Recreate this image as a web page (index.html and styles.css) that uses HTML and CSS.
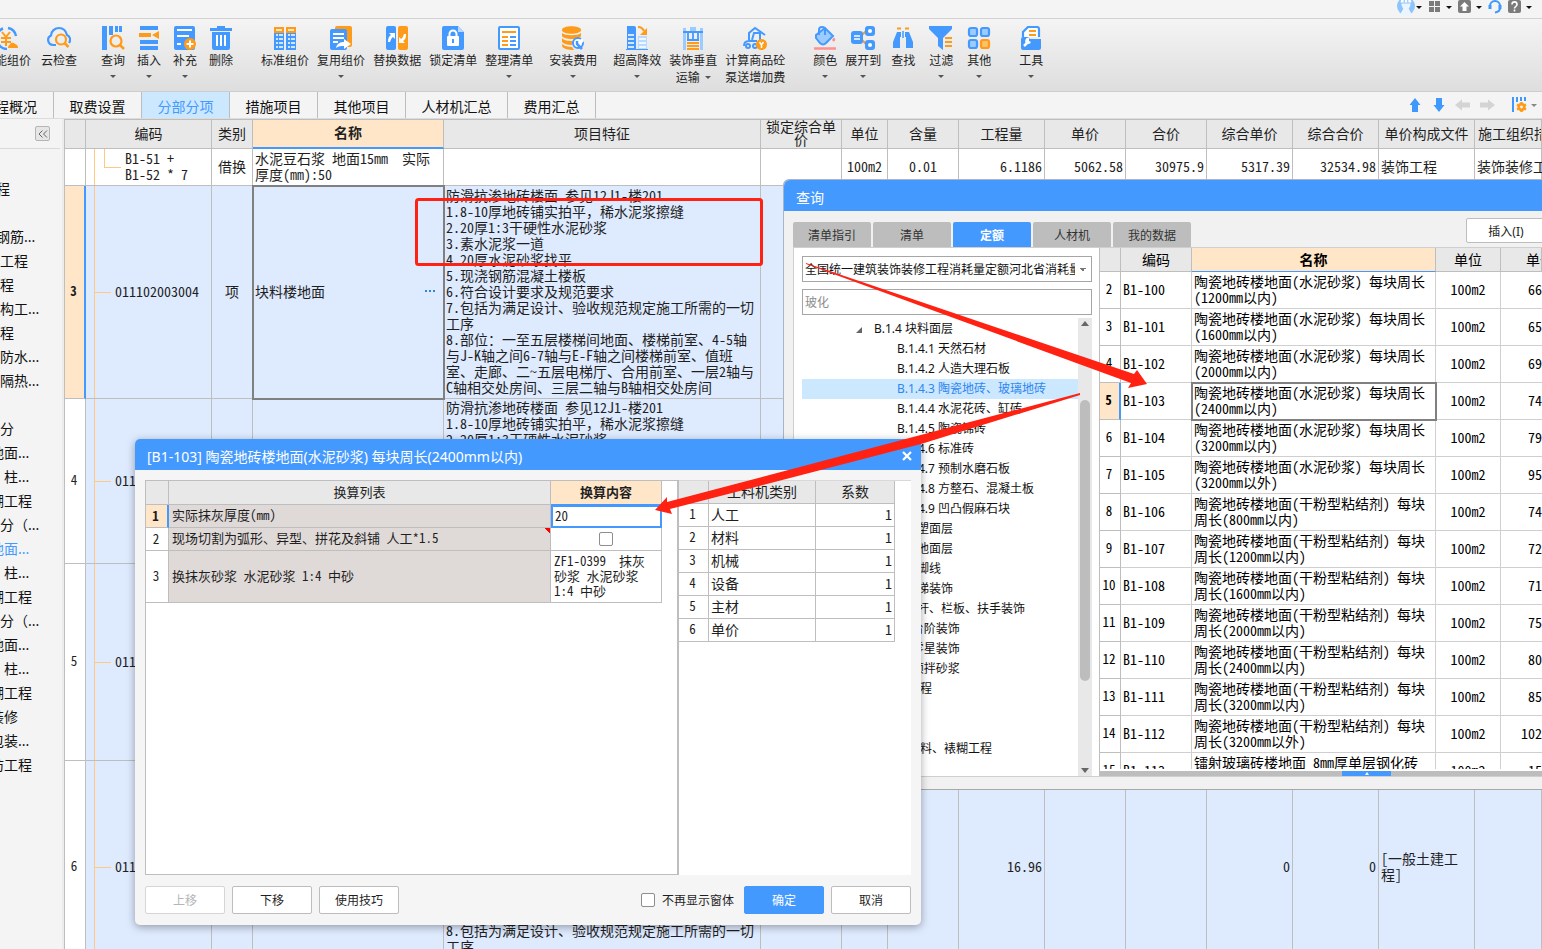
FILE: index.html
```
<!DOCTYPE html>
<html lang="zh-CN">
<head>
<meta charset="utf-8">
<title>分部分项</title>
<link rel="stylesheet" href="styles.css">
</head>
<body>
<div class="app">
  <header class="titlebar">
    <button class="tool-btn user" aria-label="用户"><svg class="avatar" viewBox="0 0 20 20"><circle cx="10" cy="9" r="10" fill="#8cc4fb"/><path d="M4 5a6 6 0 0 1 12 0z" fill="#fff"/><path d="M5 6h10c0 4-2 5-2 6l4 7H3l4-7c0-1-2-2-2-6z" fill="#eaf5ff"/><path d="M8 0v5M12 0v5" stroke="#6fb3f7"/></svg><i class="caret dark"></i></button>
    <button class="tool-btn" aria-label="布局"><svg viewBox="0 0 14 14" fill="#7b7b7b"><path d="M1 1h5v5H1zM7 1h5v5H7zM1 7h5v5H1zM7 7h5v5H7z"/></svg><i class="caret dark"></i></button>
    <button class="tool-btn" aria-label="上传"><svg viewBox="0 0 14 14"><rect width="13" height="13" rx="2" fill="#7b7b7b"/><path d="M6.500 2 11 6.500H8.500V11h-4V6.500H2z" fill="#fff"/></svg><i class="caret dark"></i></button>
    <button class="tool-btn" aria-label="客服"><svg viewBox="0 0 14 14" fill="none" stroke="#3f98fb" stroke-width="2"><path d="M2 8V6a5 5 0 0 1 10 0v2c0 3-2 4-5 4.500"/><path d="M2 5v4M12 5v4" stroke-width="3"/></svg></button>
    <button class="tool-btn" aria-label="帮助"><svg viewBox="0 0 14 14"><rect width="13" height="13" rx="2" fill="#7b7b7b"/><path d="M4 4.500C4 1 9 1 9 4.500c0 2-2.500 2-2.500 4M6.500 9.500v2" fill="none" stroke="#fff" stroke-width="1.600"/></svg><i class="caret dark"></i></button>
  </header>

  <nav class="ribbon">
    <div class="group">
      <button class="cmd"><svg viewBox="0 0 24 24" fill="none" stroke="#4499ff" stroke-width="2.500"><path d="M3 17A10 10 0 0 1 8 2.500M13 2a10 10 0 0 1 8 8M4 19a10 10 0 0 0 8 4"/><path d="M7 6l4 5 4-5M11 11v9M6 12h10M6 16h10" stroke="#ff9b1a" stroke-width="2"/><path d="M13 22c0-3 2-3 2-4a3 3 0 0 1 5 0c1 0 3 1 3 4z" fill="#ff9b1a" stroke="none"/></svg><span>智能组价</span></button>
      <button class="cmd"><svg viewBox="0 0 24 24" fill="none" stroke="#4499ff" stroke-width="2.200"><path d="M9 19H6a5 5 0 0 1-2-9.500C4 5 8 2 12 2s7 3 8 7c3 1 4 5 2 8"/><circle cx="14" cy="13.500" r="5" stroke="#ff9b1a"/><path d="M17.500 17l4 4" stroke="#ff9b1a" stroke-width="2.500"/></svg><span>云检查</span></button>
    </div>
    <div class="group">
      <button class="cmd"><svg viewBox="0 0 24 24"><path d="M1 0h5v24H1zM8 0h4v9H8zM14 0h3v6h-3zM18 0h3v6h-3z" fill="#4499ff"/><circle cx="15" cy="15" r="5.500" fill="none" stroke="#ff9b1a" stroke-width="2.200"/><path d="M19 19l4 4" stroke="#ff9b1a" stroke-width="2.500"/></svg><span>查询</span><i class="caret"></i></button>
      <button class="cmd"><svg viewBox="0 0 24 24"><path d="M3 0h18v4H3zM3 14h18v4H3zM3 20h18v4H3z" fill="#4499ff"/><path d="M2 7h12v4H2zM15 9l7-4v8z" fill="#ff9b1a"/></svg><span>插入</span><i class="caret"></i></button>
      <button class="cmd"><svg viewBox="0 0 24 24"><rect x="1" width="21" height="24" rx="2" fill="#4499ff"/><path d="M4 4h15M4 10h12M4 18h4" stroke="#fff" stroke-width="2"/><circle cx="17" cy="18" r="6" fill="#ff9b1a"/><path d="M17 14.500v7M13.500 18h7" stroke="#fff" stroke-width="2"/></svg><span>补充</span><i class="caret"></i></button>
      <button class="cmd"><svg viewBox="0 0 24 24"><path d="M8 0h8v2h7v3H1V2h7zM3 6h18v16a2 2 0 0 1-2 2H5a2 2 0 0 1-2-2z" fill="#4499ff"/><path d="M8 9v11M12 9v11M16 9v11" stroke="#fff" stroke-width="2"/></svg><span>删除</span></button>
    </div>
    <div class="group tight apart">
      <button class="cmd"><svg viewBox="0 0 24 24"><path d="M1 7h10v17H1zM13 7h10v17H13z" fill="#4499ff"/><path d="M1 1h10v6H1zM13 1h10v6H13z" fill="#ff9b1a"/><path d="M3 4h6M15 4h6M3 9h2M6 9h4M15 9h2M18 9h4M3 13h2M6 13h4M15 13h2M18 13h4M3 17h2M6 17h4M15 17h2M18 17h4M3 21h2M6 21h4M15 21h2M18 21h4" stroke="#fff" stroke-width="1.500"/></svg><span>标准组价</span></button>
      <button class="cmd"><svg viewBox="0 0 24 24"><rect x="6" width="17" height="21" rx="2" fill="#ff9b1a"/><rect x="1" y="3" width="17" height="21" rx="2" fill="#4499ff"/><path d="M4 8h11M4 12h11M4 16h5" stroke="#fff" stroke-width="1.800"/><path d="M7 22c1-5 5-6 8-6v-3l7 5-7 5v-3c-3 0-5 0-8 2z" fill="#fff"/></svg><span>复用组价</span><i class="caret"></i></button>
      <button class="cmd"><svg viewBox="0 0 24 24"><rect x="1" width="10" height="24" rx="2" fill="#4499ff"/><rect x="13" width="10" height="24" rx="2" fill="#ff9b1a"/><path d="M3 16c0-4 1-6 3-7L4 7h6v6L8 11c-2 1-2 3-3 5zM21 8c0 4-1 6-3 7l2 2h-6v-6l2 2c2-1 2-3 3-5z" fill="#fff"/></svg><span>替换数据</span></button>
      <button class="cmd"><svg viewBox="0 0 24 24"><path d="M3 0h14l6 6v16a2 2 0 0 1-2 2H3a2 2 0 0 1-2-2V2a2 2 0 0 1 2-2z" fill="#4499ff"/><path d="M17 0l6 6h-6z" fill="#b7d9ff"/><rect x="6" y="10" width="12" height="10" rx="1" fill="#fff"/><path d="M8.500 10V8a3.500 3.500 0 0 1 7 0v2" fill="none" stroke="#fff" stroke-width="2"/><path d="M12 13v4" stroke="#4499ff" stroke-width="2"/></svg><span>锁定清单</span></button>
      <button class="cmd"><svg viewBox="0 0 24 24"><rect x="2" y="1" width="20" height="22" rx="1" fill="#fff" stroke="#4499ff" stroke-width="2"/><path d="M5 6h14M5 11h6M5 15h6M5 19h6" stroke="#ff9b1a" stroke-width="2.200"/><path d="M13 11h6M13 15h6M13 19h6" stroke="#4499ff" stroke-width="2"/></svg><span>整理清单</span><i class="caret"></i></button>
    </div>
    <div class="group near">
      <button class="cmd"><svg viewBox="0 0 24 24"><path d="M1 4c0-5 19-5 19 0s-19 5-19 0z" fill="#ff9b1a"/><path d="M1 7c3 3 16 3 19 0v3c-2 4-17 4-19 0zM1 12c2 3 8 3 11 3l-1 4c-5 0-8-1-10-3zM1 18c2 2 6 3 10 3l2 3C8 24 2 23 1 20z" fill="#ff9b1a"/><circle cx="17" cy="17" r="5" fill="#fff" stroke="#4499ff" stroke-width="2"/><path d="M21 12l-4 4v3l3-1 3-3" fill="#fff"/><path d="M16 15v3l5 5" fill="none" stroke="#4499ff" stroke-width="2.500"/></svg><span>安装费用</span><i class="caret"></i></button>
    </div>
    <div class="group near tight">
      <button class="cmd"><svg viewBox="0 0 24 24"><path d="M2 0h7a2 2 0 0 1 2 2v22H2z" fill="#4499ff"/><path d="M3 9h6M3 13h6M3 17h6M3 21h6" stroke="#fff" stroke-width="1.500"/><path d="M13 10h9v13h-9z" fill="#b8dbff"/><path d="M14 13h7M14 17h7M14 21h7" stroke="#fff" stroke-width="1.500"/><path d="M1 23.500h22" stroke="#4499ff"/><path d="M13 1c4 0 5 2 6 4" fill="none" stroke="#ff9b1a" stroke-width="2.200"/><path d="M22 2v7h-7z" fill="#ff9b1a"/></svg><span>超高降效</span><i class="caret"></i></button>
      <button class="cmd"><svg viewBox="0 0 24 24"><path d="M2 2h3v22H2zM19 2h3v22h-3zM9 1h6v4H9z" fill="#9bcbff"/><path d="M2 6h20M6 14h12M7 6v8M12 6v8M17 6v8" stroke="#4499ff" stroke-width="1.800"/><path d="M6 17h12M6 20h12M6 23h12" stroke="#ff9b1a" stroke-width="2"/></svg><span>装饰垂直</span><span>运输 <i class="caret"></i></span></button>
      <button class="cmd"><svg viewBox="0 0 24 24" fill="none" stroke="#4499ff" stroke-width="2"><path d="M6 14V7l6-5 10 7M9 14l2-7h6v8M1 20c0-4 3-5 5-5h8"/><circle cx="5" cy="20" r="2"/><circle cx="12" cy="20" r="2"/><circle cx="18.500" cy="18.500" r="4.500" fill="#ff9b1a" stroke="#ff9b1a"/><path d="M16.500 16l2 3 2-3M18.500 19v3" stroke="#fff" stroke-width="1.500"/></svg><span>计算商品砼</span><span>泵送增加费</span></button>
    </div>
    <div class="group tight apart">
      <button class="cmd"><svg viewBox="0 0 24 24"><path d="M3 9l9-7 8 8-7 7c-2 2-4 2-6 0l-4-5z" fill="#9bcbff" stroke="#4499ff" stroke-width="2"/><path d="M6 9V4c0-4 6-4 6 0v5" fill="none" stroke="#4499ff" stroke-width="2"/><path d="M21 12c3 4-4 4 0 0z" fill="#ff8b8b" stroke="#ff8b8b"/><path d="M1 22.500h22" stroke="#ff9090" stroke-width="2.500"/></svg><span>颜色</span><i class="caret"></i></button>
      <button class="cmd"><svg viewBox="0 0 24 24"><path d="M10 10l6-6M10 13l6 6" stroke="#ff9b1a" stroke-width="2"/><rect y="5" width="12" height="13" rx="3" fill="#4499ff"/><rect x="14" y="0" width="10" height="10" rx="3" fill="#4499ff"/><rect x="14" y="14" width="10" height="10" rx="3" fill="#4499ff"/><path d="M3 10h6M3 13h6" stroke="#cfe5ff" stroke-width="2"/><rect x="17" y="3" width="4" height="4" rx="2" fill="#fff"/><rect x="17" y="17" width="4" height="4" rx="2" fill="#fff"/></svg><span>展开到</span><i class="caret"></i></button>
    </div>
    <div class="group close">
      <button class="cmd"><svg viewBox="0 0 24 24"><path d="M6 6h4v5h-1v11H2v-6zM14 6h4l4 10v6h-7V11h-1z" fill="#4499ff"/><path d="M12 5v7" stroke="#4499ff" stroke-width="1.500"/><path d="M6 2.500h4M14 2.500h4" stroke="#ff9b1a" stroke-width="2"/></svg><span>查找</span></button>
      <button class="cmd"><svg viewBox="0 0 24 24"><path d="M0 0h23v3l-9 9v12l-5-4v-8L0 3z" fill="#4499ff"/><path d="M16 12h7M16 16h7M16 20h7" stroke="#ff9b1a" stroke-width="2"/></svg><span>过滤</span><i class="caret"></i></button>
      <button class="cmd"><svg viewBox="0 0 24 24" stroke-width="2.200" stroke="#4499ff" fill="#9bcbff"><rect x="2" y="2" width="8" height="8" rx="2"/><rect x="14" y="2" width="8" height="8" rx="2"/><rect x="2" y="14" width="8" height="8" rx="2"/><rect x="14" y="14" width="8" height="8" rx="2" fill="#ffc068" stroke="#ff9b1a"/></svg><span>其他</span><i class="caret"></i></button>
    </div>
    <div class="group apart">
      <button class="cmd"><svg viewBox="0 0 24 24"><path d="M4 11V6l5-5h9a2 2 0 0 1 2 2v8" fill="#fff" stroke="#4499ff" stroke-width="2.200"/><path d="M10 5h7M10 9h7" stroke="#ff9b1a" stroke-width="2"/><path d="M4 11h5l2 2h11v9a2 2 0 0 1-2 2H4a2 2 0 0 1-2-2v-9a2 2 0 0 1 2-2z" fill="#4499ff"/><path d="M5 20l4-4" stroke="#fff" stroke-width="2.500"/><path d="M10 12a3 3 0 1 0 2 4l-2-1z" fill="#fff"/></svg><span>工具</span><i class="caret"></i></button>
    </div>
  </nav>

  <div class="tabbar">
    <div class="tabs">
      <button class="tab">工程概况</button><button class="tab">取费设置</button><button class="tab active">分部分项</button><button class="tab">措施项目</button><button class="tab">其他项目</button><button class="tab long">人材机汇总</button><button class="tab">费用汇总</button>
    </div>
    <div class="moves">
      <button aria-label="上移一行"><svg viewBox="0 0 16 16" fill="#3f98fb"><path d="M8 1l5.500 7H11v7H5V8H2.500z"/></svg></button>
      <button aria-label="下移一行"><svg viewBox="0 0 16 16" fill="#3f98fb"><path d="M8 15l5.500-7H11V1H5v7H2.500z"/></svg></button>
      <button aria-label="升级"><svg viewBox="0 0 16 16" fill="#d4d4d4"><path d="M0 8l7-5.500V5.500h8v5H7v3z"/></svg></button>
      <button aria-label="降级"><svg viewBox="0 0 16 16" fill="#d4d4d4"><path d="M16 8L9 2.500V5.500H1v5h8v3z"/></svg></button>
      <button class="setup" aria-label="列设置"><svg viewBox="0 0 16 16"><path d="M2 0v15M6 0v5M10 0v4M14 0v4" stroke="#3f98fb" stroke-width="2"/><circle cx="10.500" cy="10" r="2.800" fill="none" stroke="#ff9b1a" stroke-width="2.800"/><path d="M10.500 5v2M10.500 13v2M6 7.500l2 1M13 11.500l2 1M15 7.500l-2 1M6 12.500l2-1" stroke="#ff9b1a" stroke-width="2.400"/></svg><i class="caret"></i></button>
    </div>
  </div>

  <main class="workspace">
    <aside class="sidebar">
      <div class="side-head"><button aria-label="收起">
        <svg viewBox="0 0 10 8" fill="none" stroke="#666"><path d="M4.500 0.500L1 4l3.500 3.500M9 0.500L5.500 4 9 7.500"/></svg></button></div>
      <ul class="side-tree">
        <li class="l1">程</li><li></li><li class="l1">钢筋...</li><li class="l2">工程</li><li class="l2">程</li><li class="l2">构工...</li><li class="l2">程</li><li class="l2">防水...</li><li class="l2">隔热...</li><li></li><li class="l2">分</li><li>地面...</li><li>、柱...</li><li>棚工程</li><li class="l2">分（...</li><li class="current">地面...</li><li>、柱...</li><li>棚工程</li><li class="l2">分（...</li><li>地面...</li><li>、柱...</li><li>棚工程</li><li>装修</li><li>包装...</li><li>防工程</li>
      </ul>
    </aside>

    <div class="sheet">
      <table class="grid main-grid">
        <colgroup><col class="c-no"><col class="c-code"><col class="c-kind"><col class="c-name"><col class="c-feat"><col class="c-lock"><col class="c-unit"><col class="c-qty"><col class="c-amt"><col class="c-price"><col class="c-price"><col class="c-amt"><col class="c-amt"><col class="c-file"><col></colgroup>
        <thead><tr><th></th><th>编码</th><th>类别</th><th class="picked">名称</th><th>项目特征</th><th>锁定综合单<br>价</th><th>单位</th><th>含量</th><th>工程量</th><th>单价</th><th>合价</th><th>综合单价</th><th>综合合价</th><th>单价构成文件</th><th class="left">施工组织措施</th></tr></thead>
        <tbody>
          <tr class="r-short"><td></td><td class="code sub">B1-51 +<br>B1-52 * 7</td><td class="mid">借换</td><td>水泥豆石浆 地面15mm&nbsp; 实际<br>厚度(mm):50</td><td></td><td></td><td class="mid">100m2</td><td class="mid">0.01</td><td class="num">6.1186</td><td class="num">5062.58</td><td class="num">30975.9</td><td class="num">5317.39</td><td class="num">32534.98</td><td>装饰工程</td><td>装饰装修工程</td></tr>
          <tr class="item r-tall"><td class="no current">3</td><td class="code">011102003004</td><td class="mid">项</td><td class="focus"><div class="split"><span>块料楼地面</span><button class="more" aria-label="更多"><svg viewBox="0 0 11 2" fill="#2f86d6"><path d="M0 0h2v2H0zM4 0h2v2H4zM8 0h2v2H8z"/></svg></button></div></td><td>防滑抗渗地砖楼面 参见12J1-楼201<br>1.8-10厚地砖铺实拍平，稀水泥浆擦缝<br>2.20厚1:3干硬性水泥砂浆<br>3.素水泥浆一道<br>4.20厚水泥砂浆找平<br>5.现浇钢筋混凝土楼板<br>6.符合设计要求及规范要求<br>7.包括为满足设计、验收规范规定施工所需的一切<br>工序<br>8.部位：一至五层楼梯间地面、楼梯前室、4-5轴<br>与J-K轴之间6-7轴与E-F轴之间楼梯前室、值班<br>室、走廊、二~五层电梯厅、合用前室、一层2轴与<br>C轴相交处房间、三层二轴与B轴相交处房间</td><td></td><td></td><td></td><td></td><td></td><td></td><td></td><td></td><td></td><td></td></tr>
          <tr class="item r-mid"><td class="no">4</td><td class="code">011102003005</td><td></td><td></td><td class="top">防滑抗渗地砖楼面 参见12J1-楼201<br>1.8-10厚地砖铺实拍平，稀水泥浆擦缝<br>2.20厚1:3干硬性水泥砂浆</td><td></td><td></td><td></td><td></td><td></td><td></td><td></td><td></td><td></td><td></td></tr>
          <tr class="item r-big"><td class="no">5</td><td class="code">011102003006</td><td></td><td></td><td></td><td></td><td></td><td></td><td></td><td></td><td></td><td></td><td></td><td></td><td></td></tr>
          <tr class="item r-tall"><td class="no">6</td><td class="code">011102003007</td><td></td><td></td><td class="bottom">8.包括为满足设计、验收规范规定施工所需的一切<br>工序<br>9.部位：</td><td></td><td></td><td></td><td class="num">16.96</td><td></td><td></td><td class="num">0</td><td class="num">0</td><td>[一般土建工<br>程]</td><td></td></tr>
        </tbody>
      </table>
    </div>
  </main>

  <section class="query" aria-label="查询">
    <h2 class="dlg-title">查询</h2>
    <div class="query-tabs">
      <button>清单指引</button><button>清单</button><button class="active">定额</button><button>人材机</button><button>我的数据</button>
      <button class="insert">插入(I)</button>
    </div>
    <div class="query-body">
      <div class="catalog">
        <select aria-label="定额库"><option>全国统一建筑装饰装修工程消耗量定额河北省消耗量定额</option></select>
        <input type="text" placeholder="玻化" aria-label="搜索">
        <div class="tree-wrap">
          <ul class="tree">
            <li class="open">B.1.4 块料面层</li>
            <li class="leaf">B.1.4.1 天然石材</li><li class="leaf">B.1.4.2 人造大理石板</li><li class="leaf active">B.1.4.3 陶瓷地砖、玻璃地砖</li><li class="leaf">B.1.4.4 水泥花砖、缸砖</li><li class="leaf">B.1.4.5 陶瓷锦砖</li><li class="leaf">B.1.4.6 标准砖</li><li class="leaf">B.1.4.7 预制水磨石板</li><li class="leaf">B.1.4.8 方整石、混凝土板</li><li class="leaf">B.1.4.9 凹凸假麻石块</li>
            <li>B.1.5 橡塑面层</li><li>B.1.6 其他面层</li><li>B.1.7 踢脚线</li><li>B.1.8 楼梯装饰</li><li>B.1.9 栏杆、栏板、扶手装饰</li><li>B.1.10 台阶装饰</li><li>B.1.11 零星装饰</li><li>B.1.12 预拌砂浆</li>
            <li class="root">B.2 墙柱面工程</li><li class="root">B.3 天棚工程</li><li class="root">B.4 门窗工程</li><li class="root">B.5 油漆、涂料、裱糊工程</li><li class="root">B.6 其他工程</li>
          </ul>
          <div class="scroll"><i class="up"></i><i class="thumb"></i><i class="down"></i></div>
        </div>
      </div>
      <div class="result">
        <div class="result-clip">
        <table class="grid result-grid">
          <colgroup><col class="q-no"><col class="q-code"><col class="q-name"><col class="q-unit"><col></colgroup>
          <thead><tr><th></th><th>编码</th><th class="picked">名称</th><th>单位</th><th class="cut">单价</th></tr></thead>
          <tbody>
            <tr><td class="no">2</td><td>B1-100</td><td>陶瓷地砖楼地面(水泥砂浆) 每块周长<br>(1200mm以内)</td><td class="mid">100m2</td><td class="num">66</td></tr>
            <tr><td class="no">3</td><td>B1-101</td><td>陶瓷地砖楼地面(水泥砂浆) 每块周长<br>(1600mm以内)</td><td class="mid">100m2</td><td class="num">65</td></tr>
            <tr><td class="no">4</td><td>B1-102</td><td>陶瓷地砖楼地面(水泥砂浆) 每块周长<br>(2000mm以内)</td><td class="mid">100m2</td><td class="num">69</td></tr>
            <tr><td class="no current">5</td><td>B1-103</td><td class="focus">陶瓷地砖楼地面(水泥砂浆) 每块周长<br>(2400mm以内)</td><td class="mid">100m2</td><td class="num">74</td></tr>
            <tr><td class="no">6</td><td>B1-104</td><td>陶瓷地砖楼地面(水泥砂浆) 每块周长<br>(3200mm以内)</td><td class="mid">100m2</td><td class="num">79</td></tr>
            <tr><td class="no">7</td><td>B1-105</td><td>陶瓷地砖楼地面(水泥砂浆) 每块周长<br>(3200mm以外)</td><td class="mid">100m2</td><td class="num">95</td></tr>
            <tr><td class="no">8</td><td>B1-106</td><td>陶瓷地砖楼地面(干粉型粘结剂) 每块<br>周长(800mm以内)</td><td class="mid">100m2</td><td class="num">74</td></tr>
            <tr><td class="no">9</td><td>B1-107</td><td>陶瓷地砖楼地面(干粉型粘结剂) 每块<br>周长(1200mm以内)</td><td class="mid">100m2</td><td class="num">72</td></tr>
            <tr><td class="no">10</td><td>B1-108</td><td>陶瓷地砖楼地面(干粉型粘结剂) 每块<br>周长(1600mm以内)</td><td class="mid">100m2</td><td class="num">71</td></tr>
            <tr><td class="no">11</td><td>B1-109</td><td>陶瓷地砖楼地面(干粉型粘结剂) 每块<br>周长(2000mm以内)</td><td class="mid">100m2</td><td class="num">75</td></tr>
            <tr><td class="no">12</td><td>B1-110</td><td>陶瓷地砖楼地面(干粉型粘结剂) 每块<br>周长(2400mm以内)</td><td class="mid">100m2</td><td class="num">80</td></tr>
            <tr><td class="no">13</td><td>B1-111</td><td>陶瓷地砖楼地面(干粉型粘结剂) 每块<br>周长(3200mm以内)</td><td class="mid">100m2</td><td class="num">85</td></tr>
            <tr><td class="no">14</td><td>B1-112</td><td>陶瓷地砖楼地面(干粉型粘结剂) 每块<br>周长(3200mm以外)</td><td class="mid">100m2</td><td class="num">102</td></tr>
            <tr><td class="no">15</td><td>B1-113</td><td>镭射玻璃砖楼地面 8mm厚单层钢化砖<br>周长(2000mm以内)</td><td class="mid">100m2</td><td class="num">15</td></tr>
          </tbody>
        </table>
        </div>
        <div class="splitter"><button aria-label="展开"></button></div>
      </div>
    </div>
  </section>

  <section class="convert" aria-label="换算">
    <h2 class="dlg-title">[B1-103] 陶瓷地砖楼地面(水泥砂浆) 每块周长(2400mm以内)<button class="close-btn" aria-label="关闭"><svg viewBox="0 0 10 10" stroke="#fff" stroke-width="2.200"><path d="M1 1l8 8M9 1L1 9"/></svg></button></h2>
    <div class="convert-body">
      <div class="pane-left">
        <table class="grid small">
          <colgroup><col class="k-no"><col class="k-list"><col class="k-val"></colgroup>
          <thead><tr><th></th><th>换算列表</th><th class="picked">换算内容</th></tr></thead>
          <tbody>
            <tr><td class="no current">1</td><td class="label"><label for="thick">实际抹灰厚度(mm)</label></td><td class="edit"><input id="thick" type="text" value="20"></td></tr>
            <tr><td class="no">2</td><td class="label flag"><label for="cutting">现场切割为弧形、异型、拼花及斜铺 人工*1.5</label></td><td class="mid"><input id="cutting" class="tick" type="checkbox"></td></tr>
            <tr class="tall"><td class="no">3</td><td class="label">换抹灰砂浆 水泥砂浆 1:4 中砂</td><td>ZF1-0399&nbsp; 抹灰<br>砂浆 水泥砂浆<br>1:4 中砂</td></tr>
          </tbody>
        </table>
      </div>
      <div class="pane-right">
        <table class="grid factor">
          <colgroup><col class="f-no"><col class="f-kind"><col class="f-val"></colgroup>
          <thead><tr><th></th><th>工料机类别</th><th>系数</th></tr></thead>
          <tbody>
            <tr><td class="no">1</td><td>人工</td><td class="num">1</td></tr><tr><td class="no">2</td><td>材料</td><td class="num">1</td></tr><tr><td class="no">3</td><td>机械</td><td class="num">1</td></tr><tr><td class="no">4</td><td>设备</td><td class="num">1</td></tr><tr><td class="no">5</td><td>主材</td><td class="num">1</td></tr><tr><td class="no">6</td><td>单价</td><td class="num">1</td></tr>
          </tbody>
        </table>
      </div>
    </div>
    <footer class="convert-foot">
      <button class="btn" disabled>上移</button><button class="btn">下移</button><button class="btn">使用技巧</button>
      <label class="again"><input class="tick" type="checkbox">不再显示窗体</label>
      <button class="btn primary">确定</button><button class="btn">取消</button>
    </footer>
  </section>

  <svg class="marks" width="1542" height="949" viewBox="0 0 1542 949" fill="#ff2213" aria-hidden="true">
    <rect x="416.500" y="199.500" width="345" height="65" rx="2" fill="none" stroke="#ff2213" stroke-width="3"/>
    <path d="M806 263L1134 374l3-4 10 14-19 4 3-5L806 264z"/>
    <path d="M1080 393L667 502v-5l-12 13 17 4-2-5L921 444l159-49z"/>
  </svg>
</div>
</body>
</html>
```
FILE: styles.css
```
* { box-sizing: border-box; }

body {
  margin: 0;
  font-family: "Noto Sans", "Noto Sans CJK SC", sans-serif;
  font-size: 12px;
  color: #1f1f1f;
}

button { font: inherit; color: inherit; padding: 0; border: 0; background: none; }
ul { list-style: none; margin: 0; padding: 0; }

.app {
  position: relative;
  display: flex;
  flex-direction: column;
  height: 100vh;
  overflow: hidden;
  background: #f4f4f4;
}

.caret {
  display: inline-block;
  width: 0;
  border: 3px solid transparent;
  border-top-color: #555;
  border-bottom: 0;
}
.caret.dark { border-top-color: #111; }

/* Title bar */
.titlebar {
  display: flex;
  justify-content: flex-end;
  flex: none;
  gap: 6px;
  height: 19px;
  padding-right: 10px;
  border-bottom: 1px solid #d2d2d2;
}
.tool-btn { display: flex; align-items: center; gap: 4px; height: 14px; }
.tool-btn.user { gap: 0; }
.tool-btn svg { width: 14px; height: 14px; }
.tool-btn .avatar { width: 20px; height: 18px; }

/* Ribbon */
.ribbon {
  display: flex;
  flex: none;
  height: 73px;
  padding-top: 7px;
  border-bottom: 1px solid #cdcdcd;
  background: linear-gradient(#f4f4f4, #dedede);
}
.group { display: flex; gap: 12px; margin-left: 24px; }
.group:first-child { margin-left: -17px; gap: 10px; }
.group.tight { gap: 8px; }
.group.near { margin-left: 16px; }
.group.apart { margin-left: 28px; }
.group.close { margin-left: 10px; gap: 14px; }
.cmd {
  display: flex;
  flex-direction: column;
  align-items: center;
  white-space: nowrap;
  line-height: 17px;
}
.cmd svg { width: 24px; height: 24px; margin-bottom: 2px; }
.cmd > .caret { margin-top: 6px; }
.cmd span .caret { margin: 0 0 3px 2px; }

/* Tab bar */
.tabbar {
  display: flex;
  justify-content: space-between;
  flex: none;
  height: 27px;
  border-bottom: 1px solid #dcdcdc;
}
.tabs { display: flex; margin-left: -35px; }
.tab {
  width: 88px;
  padding-top: 2px;
  border-right: 1px solid #bdbdbd;
  font-size: 14px;
  color: #111;
}
.tab:first-child { width: 89px; }
.tab.long { width: 102px; }
.tab.active { background: #cce8ff; color: #4499ff; }
.moves { display: flex; align-items: center; gap: 8px; padding-right: 5px; }
.moves button { display: flex; align-items: center; gap: 4px; }
.moves svg { width: 16px; height: 16px; }
.moves .setup { margin-left: 8px; }
.moves .caret { border-top-color: #888; }

/* Workspace */
.workspace { display: flex; flex: 1; min-height: 0; }
.sidebar {
  flex: none;
  width: 64px;
  overflow: hidden;
  border-right: 2px solid #ececec;
  font-size: 14px;
  color: #111;
}
.side-head { display: flex; justify-content: flex-end; width: 60px; height: 30px; padding: 7px 10px; border-bottom: 1px solid #d9d9d9; }
.side-head button { display: flex; align-items: center; justify-content: center; width: 15px; height: 15px; border: 1px solid #b5b5b5; border-radius: 2px; background: #e6e6e6; }
.side-head svg { width: 10px; height: 8px; flex: none; }
.side-tree { margin: 28px 0 0 -10px; }
.side-tree li { height: 24px; line-height: 24px; white-space: nowrap; }
.side-tree .l1 { padding-left: 6px; }
.side-tree .l2 { padding-left: 10px; }
.side-tree .current { color: #4499ff; }

.sheet { flex: 1; min-width: 0; overflow: hidden; border: 1px solid #bebebe; border-width: 1px 0 0 1px; background: #fff; }

/* Data grids */
.grid {
  width: 100%;
  table-layout: fixed;
  border-collapse: separate;
  border-spacing: 0;
  font-family: "Noto Sans Mono CJK SC", "Liberation Serif", "Noto Sans CJK SC", monospace;
  font-size: 14px;
  line-height: 16px;
}
.grid th, .grid td {
  padding: 0 2px 3px;
  border: solid #bebebe;
  border-width: 0 1px 1px 0;
  text-align: left;
  white-space: nowrap;
}
.grid th { padding: 0 0 2px; background: #e8e8e8; text-align: center; font-weight: 400; overflow: hidden; }
.grid .picked { background: #ffe6c8; border-bottom: 2px solid #4499ff; font-weight: 700; }
.grid .left { padding-left: 3px; text-align: left; }
.grid .mid { padding: 0 0 3px; text-align: center; }
.grid .num { text-align: right; }
.grid .top { vertical-align: top; }
.grid .bottom { vertical-align: bottom; }
.grid .no { padding: 0 2px 2px 0; background: #fff; text-align: center; font-size: 13px; }
.grid .no.current { border-right: 2px solid #4499ff; background: #ffe6c8; font-weight: 700; }
.grid .focus { outline: 2px solid #808080; outline-offset: -1px; }

.c-no { width: 21px; }
.c-code { width: 126px; }
.c-kind { width: 41px; }
.c-name { width: 191px; }
.c-feat { width: 317px; }
.c-lock { width: 81px; }
.c-unit { width: 46px; }
.c-qty { width: 71px; }
.c-amt { width: 86px; }
.c-price { width: 81px; }
.c-file { width: 96px; }

.main-grid th { height: 29px; line-height: 13px; }
.main-grid .r-short td { height: 37px; }
.main-grid .r-tall td { height: 213px; }
.main-grid .r-mid td { height: 165px; }
.main-grid .r-big td { height: 197px; }
.main-grid .item td { background-color: #deeafe; }
.main-grid .item .no { background-color: #fff; }
.main-grid .item .no.current { background-color: #ffe6c8; }
.main-grid .code {
  padding-left: 29px;
  background-image: linear-gradient(#ffc983, #ffc983), linear-gradient(#ffc983, #ffc983);
  background-repeat: no-repeat;
  background-position: 8px 0, 9px 50%;
  background-size: 1px 100%, 16px 1px;
}
.main-grid .code.sub {
  padding-left: 39px;
  background-image: linear-gradient(#ffc983, #ffc983), linear-gradient(#ffc983, #ffc983), linear-gradient(#ffc983, #ffc983);
  background-position: 8px 0, 18px 0, 18px 50%;
  background-size: 1px 100%, 1px 50%, 17px 1px;
}
.split { display: flex; justify-content: space-between; align-items: center; padding-right: 5px; }
.more svg { display: block; width: 11px; height: 2px; }

/* Floating windows */
.dlg-title {
  display: flex;
  justify-content: space-between;
  align-items: center;
  flex: none;
  height: 31px;
  margin: 0;
  padding: 2px 9px 0 12px;
  background: #4499ff;
  color: #fff;
  font-size: 14px;
  font-weight: 400;
}

.query {
  position: absolute;
  top: 180px;
  right: 0;
  left: 784px;
  display: flex;
  flex-direction: column;
  height: 610px;
  border-bottom: 1px solid #a8a8a8;
  border-radius: 6px 0 0 0;
  overflow: hidden;
  background: #f1f1f1;
  box-shadow: -1px -1px 0 #a9b4c4;
}
.query-tabs { display: flex; gap: 2px; padding: 7px 0 0 9px; }
.query-tabs button {
  width: 78px;
  height: 25px;
  margin-top: 4px;
  background: #bdbdbd;
  border-radius: 2px 2px 0 0;
  color: #333;
}
.query-tabs .active { background: #4499ff; color: #fff; font-weight: 700; }
.query-tabs .insert { width: 80px; margin: 0 -4px 0 auto; border: 1px solid #bdbdbd; border-radius: 2px; background: #fff; color: #222; }
.query-body {
  display: flex;
  flex: 1;
  min-height: 0;
  margin: 0 0 12px 9px;
  border: solid #cfcfcf;
  border-width: 1px 0 1px 1px;
  background: #fff;
}
.catalog { display: flex; flex-direction: column; flex: none; width: 305px; padding: 8px 7px 0 8px; }
.catalog select, .catalog input {
  flex: none;
  width: 100%;
  height: 26px;
  padding: 0 16px 0 2px;
  border: 1px solid #a6a6a6;
  border-radius: 0;
  background-color: #fff;
  color: #111;
  font: inherit;
}
.catalog select {
  appearance: none;
  background-image: linear-gradient(to bottom right, #777 50%, transparent 50%), linear-gradient(to bottom left, #777 50%, transparent 50%);
  background-repeat: no-repeat;
  background-position: right 5px top 11px, right 8px top 11px;
  background-size: 3px 3px;
}
.catalog input { margin-top: 7px; }
.catalog input::placeholder { color: #8c8c8c; }
.tree-wrap { display: flex; flex: 1; min-height: 0; padding-top: 3px; overflow: hidden; }
.tree { flex: 1; padding-top: 1px; color: #111; }
.tree li { height: 20px; padding-left: 72px; line-height: 20px; white-space: nowrap; }
.tree li.leaf { padding-left: 95px; }
.tree li.root { padding-left: 49px; }
.tree li.active { background: #cce8ff; color: #2f86ef; }
.tree li.open::before {
  content: "";
  display: inline-block;
  margin: 0 12px 0 -18px;
  border: 3px solid;
  border-color: transparent #666 #666 transparent;
}
.scroll { display: flex; flex-direction: column; align-items: center; flex: none; width: 14px; padding: 3px 0; background: #e8e8e8; }
.scroll .up, .scroll .down { border: 4px solid transparent; }
.scroll .up { border-bottom: 5px solid #666; border-top: 0; }
.scroll .down { margin-top: auto; border-top: 5px solid #666; border-bottom: 0; }
.scroll .thumb { width: 10px; height: 281px; margin-top: 74px; border-radius: 5px; background: #bdbdbd; }

.result { display: flex; flex-direction: column; flex: 1; min-width: 0; border-left: 1px solid #bebebe; }
.result-clip { flex: 1; min-height: 0; overflow: hidden; color: #000; }
.result-grid td { height: 37px; border-color: #cfcfcf; }
.result-grid th { height: 24px; }
.result-grid .picked { border-bottom-width: 1px; }
.result-grid .no { border-color: #bebebe; }
.result-grid .num { padding-right: 0; border-right: 0; }
.result-grid .cut { padding-left: 25px; text-align: left; }
.q-no { width: 21px; }
.q-code { width: 71px; }
.q-name { width: 244px; }
.q-unit { width: 65px; }
.splitter { display: flex; justify-content: center; flex: none; height: 5px; margin-top: 2px; padding-left: 91px; background: #bdbdbd; }
.splitter button { width: 49px; height: 5px; background: #4499ff; }
.splitter button::after { content: ""; display: block; width: 0; margin: 0 auto; border: 2px solid transparent; border-bottom: 3px solid #fff; border-top: 0; }

.convert {
  position: absolute;
  top: 439px;
  left: 135px;
  display: flex;
  flex-direction: column;
  width: 786px;
  height: 486px;
  border-radius: 5px;
  background: #f5f5f5;
  box-shadow: 0 2px 8px rgba(0, 0, 0, 0.35);
}
.convert .dlg-title { border-radius: 5px 5px 0 0; }
.close-btn svg { display: block; width: 10px; height: 10px; }
.convert-body { display: flex; flex: 1; min-height: 0; padding: 10px 10px 0; }
.pane-left { flex: none; width: 534px; border: 1px solid #bebebe; border-right-width: 2px; background: #fff; }
.pane-right { flex: 1; border-top: 1px solid #d8d8d8; background: #fff; }
.small { width: 516px; font-size: 13px; line-height: 15px; }
.small th { height: 24px; }
.small .picked { border-bottom-width: 1px; }
.small td { height: 23px; padding-left: 3px; }
.small .tall td { height: 52px; }
.small .label { background-color: #dfdad8; }
.small .flag {
  background-image: linear-gradient(to bottom left, #f00 50%, transparent 50%);
  background-repeat: no-repeat;
  background-position: right top;
  background-size: 6px 6px;
}
.small .edit { padding: 0; border: 0; }
.edit input {
  display: block;
  width: 100%;
  height: 23px;
  padding: 0 2px 2px;
  border: 2px solid #4499ff;
  font: inherit;
  color: #1f1f1f;
}
.tick {
  appearance: none;
  width: 14px;
  height: 14px;
  margin: 0;
  border: 1px solid #8e8e8e;
  border-radius: 2px;
  background: #fff;
  vertical-align: middle;
}
.k-no { width: 23px; }
.k-list { width: 382px; }
.k-val { width: 111px; }
.factor { width: 216px; }
.factor th, .factor td { height: 23px; }
.f-no { width: 30px; }
.f-kind { width: 107px; }
.f-val { width: 79px; }

.convert-foot { display: flex; align-items: center; gap: 7px; padding: 11px 10px; }
.btn { width: 80px; height: 28px; border: 1px solid #bdbdbd; border-radius: 2px; background: #fff; }
.btn:disabled { border-color: #d6d6d6; color: #b5b5b5; }
.btn.primary { border-color: #4499ff; background: #4499ff; color: #fff; }
.again { display: flex; align-items: center; gap: 7px; margin: 0 3px 0 auto; }

/* Red annotations over the windows */
.marks { position: absolute; top: 0; left: 0; pointer-events: none; }
```
